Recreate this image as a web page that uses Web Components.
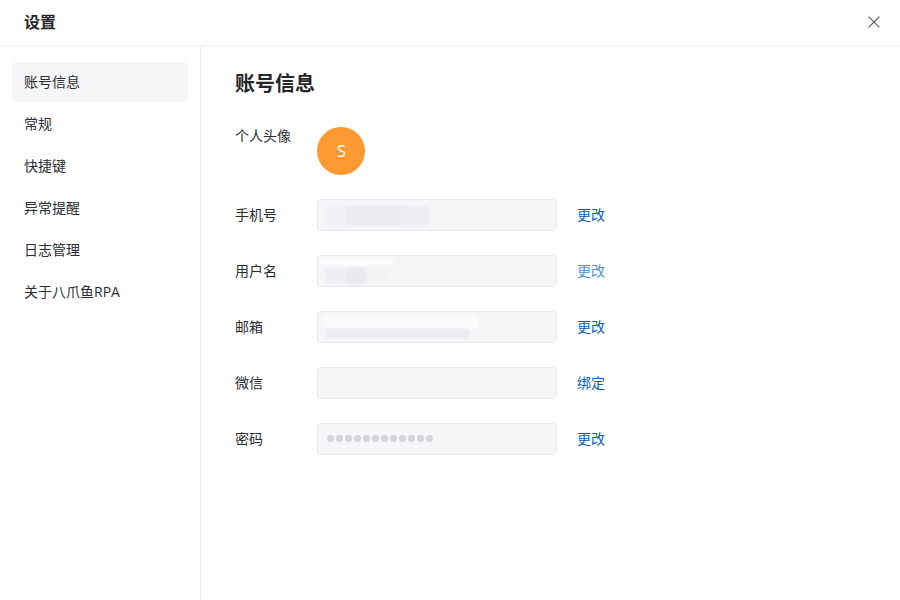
<!DOCTYPE html>
<html lang="zh"><head><meta charset="utf-8"><title>设置</title>
<style>
html,body{margin:0;padding:0;background:#fff}
body{width:900px;height:600px;overflow:hidden;font-family:"Open Sans","Noto Sans CJK SC",sans-serif;color:#25252b}
</style></head><body>
<settings-app></settings-app>
<template id="t-app">
<style>
:host{display:flex;flex-direction:column;width:900px;height:600px}
header{flex:none;border-bottom:1px solid #eeeef0;display:flex;align-items:center;justify-content:space-between;padding:0 20px 2px 24px;box-sizing:border-box;height:46px}
h1{margin:0;font-size:16px;font-weight:700;line-height:24px;color:#25252b}
svg{display:block}
.body{flex:1;display:flex;min-height:0}
nav{width:201px;flex:none;box-sizing:border-box;border-right:1px solid #eeeef0;padding:16px 12px 0;display:flex;flex-direction:column;gap:2px}
main{flex:1;padding:23px 0 0 34px;display:flex;flex-direction:column}
h2{margin:0 0 28px;font-size:20px;line-height:30px;font-weight:700;color:#25252b}
.rows{display:flex;flex-direction:column;gap:24px}
</style>
<header><h1>设置</h1>
<svg width="12" height="12" viewBox="0 0 12 12" fill="none" stroke="#5c5c66" stroke-width="1.2"><path d="M.6.6l10.8 10.8M11.4.6L.6 11.4"/></svg>
</header>
<div class="body">
<nav>
<menu-item active>账号信息</menu-item><menu-item>常规</menu-item><menu-item>快捷键</menu-item><menu-item>异常提醒</menu-item><menu-item>日志管理</menu-item><menu-item>关于八爪鱼RPA</menu-item>
</nav>
<main>
<h2>账号信息</h2>
<div class="rows">
<form-row label="个人头像" top><user-avatar>S</user-avatar></form-row>
<form-row label="手机号" action="更改"><field-box><blur-block style="left:8px;top:6px;width:103px;height:20px;background:linear-gradient(90deg,#f1f1f5 0 20px,#ebebf0 20px 80px,#eeeef2 80px)"></blur-block></field-box></form-row>
<form-row label="用户名" action="更改" soft><field-box><blur-block style="left:0;top:3px;width:76px;height:7px;background:#fbfbfd"></blur-block><blur-block style="left:8px;top:12px;width:63px;height:16px;background:linear-gradient(90deg,#efeff3 0 20px,#e9e9ee 20px 40px,#f3f3f6 40px)"></blur-block></field-box></form-row>
<form-row label="邮箱" action="更改"><field-box><blur-block style="left:6px;top:4px;width:154px;height:12px;background:#fbfbfd"></blur-block><blur-block style="left:8px;top:17px;width:143px;height:9px;background:#ebebf0"></blur-block></field-box></form-row>
<form-row label="微信" action="绑定"><field-box></field-box></form-row>
<form-row label="密码" action="更改"><field-box dots></field-box></form-row>
</div>
</main>
</div>
</template>
<script>
function def(name, css, html){
  customElements.define(name, class extends HTMLElement{
    connectedCallback(){
      if(this.shadowRoot) return;
      const r=this.attachShadow({mode:'open'});
      r.innerHTML='<style>'+css+'</style>'+(typeof html==='function'?html(this):html);
    }
  });
}
customElements.define('settings-app', class extends HTMLElement{
  connectedCallback(){
    this.attachShadow({mode:'open'}).appendChild(document.getElementById('t-app').content.cloneNode(true));
  }
});
def('menu-item',`:host{display:block;box-sizing:border-box;height:40px;line-height:40px;padding:0 12px;font-size:14px;color:#2c2c33;border-radius:4px}
:host([active]){background:#f6f6f9}`,'<slot></slot>');
def('form-row',`:host{display:flex;align-items:center;min-height:32px;font-size:14px}
:host([top]){align-items:flex-start}
.l{width:82px;flex:none;line-height:20px;color:#2c2c33}
:host([top]) .l{margin-top:-1px;padding-bottom:2px}
.a{margin-left:20px;font-size:14px;color:#0a5fc4;line-height:20px}
:host([soft]) .a{color:#4f90d8}`,
  h=>`<span class="l">${h.getAttribute('label')}</span><slot></slot>`+(h.getAttribute('action')?`<span class="a">${h.getAttribute('action')}</span>`:''));
def('user-avatar',`:host{display:flex;width:48px;height:48px;border-radius:50%;background:#ff9a33;color:#fff;align-items:center;justify-content:center;font-size:16px;padding-left:1px;box-sizing:border-box;font-family:"Open Sans",sans-serif}`,'<slot></slot>');
def('field-box',`:host{display:block;position:relative;box-sizing:border-box;width:240px;height:32px;background:#f6f6f9;border:1px solid #e8e8ec;border-radius:4px;overflow:hidden}
.d{display:flex;gap:2px;padding:11px 0 0 9px}
.d i{width:7px;height:7px;border-radius:50%;background:#d4d4da}`,
  h=>h.hasAttribute('dots')?'<div class="d">'+'<i></i>'.repeat(12)+'</div>':'<slot></slot>');
def('blur-block',`:host{display:block;position:absolute;filter:blur(.8px)}`,'');
</script>
</body></html>
